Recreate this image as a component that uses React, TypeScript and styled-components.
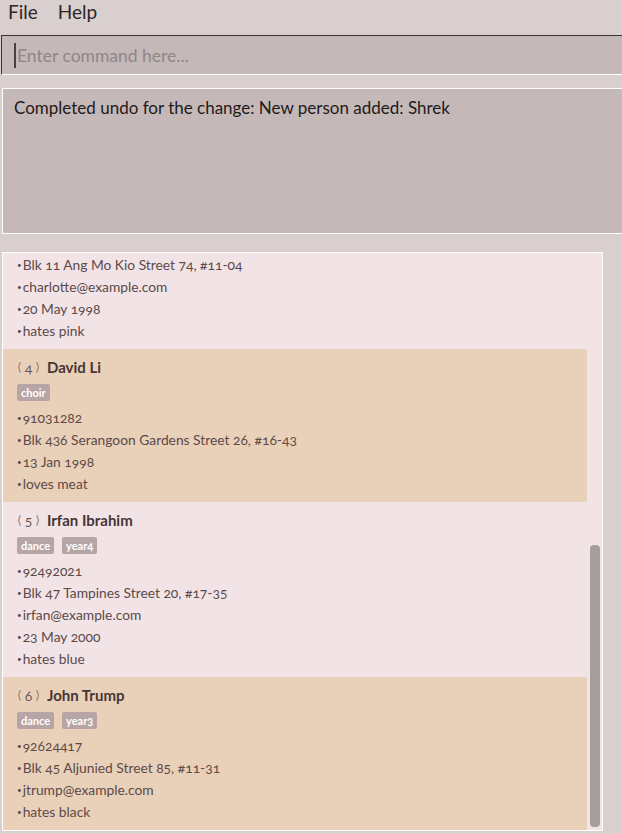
import React, { useLayoutEffect, useRef } from "react";
import styled, { createGlobalStyle } from "styled-components";

const GlobalStyle = createGlobalStyle`
  html, body {
    margin: 0;
    padding: 0;
    background: #dacfcf;
    overflow: hidden;
  }
  body {
    font-family: Lato, "Noto Sans", sans-serif;
    font-variant-numeric: oldstyle-nums;
  }
  * {
    box-sizing: border-box;
  }
`;

const Window = styled.div`
  width: 622px;
  height: 834px;
  background: #dacfcf;
  display: flex;
  flex-direction: column;
  overflow: hidden;
`;

const MenuBar = styled.div`
  height: 24px;
  flex: none;
  display: flex;
  align-items: center;
  gap: 20px;
  padding-left: 8px;
  font-size: 19px;
  color: #2c2626;
`;

const MenuItem = styled.span`
  line-height: 22px;
`;

const CommandBox = styled.div`
  flex: none;
  margin-top: 11px;
  margin-left: 1px;
  height: 40px;
  background: #c5b8b8;
  border-top: 1px solid #3c3333;
  border-left: 1px solid #3c3333;
  border-bottom: 1px solid #ffffff;
  display: flex;
  align-items: center;
  padding-left: 12px;
  gap: 1px;
`;

const Caret = styled.span`
  width: 2px;
  height: 25px;
  background: #4a4040;
  flex: none;
`;

const CommandInput = styled.input`
  flex: 1;
  border: none;
  outline: none;
  background: transparent;
  font-family: Lato, "Noto Sans", sans-serif;
  font-size: 17.5px;
  color: #2c2626;
  padding: 0;
  &::placeholder {
    color: #8f8686;
  }
`;

const ResultBox = styled.div`
  flex: none;
  margin-top: 13px;
  margin-left: 2px;
  height: 146px;
  background: #c5b8b8;
  border: 1px solid #ffffff;
  border-right: none;
  padding: 9px 11px;
  font-size: 17px;
  color: #1f1a1a;
  line-height: 20px;
`;

const ListPanel = styled.div`
  flex: none;
  margin-top: 18px;
  margin-left: 2px;
  width: 601px;
  height: 579px;
  border: 1px solid #ffffff;
  background: #f2e4e6;
  display: flex;
`;

const Viewport = styled.div`
  flex: 1;
  overflow: hidden;
`;

const ScrollTrack = styled.div`
  width: 15px;
  flex: none;
  display: flex;
  flex-direction: column;
  justify-content: flex-end;
  padding: 0 2px 3px 3px;
`;

const Thumb = styled.div`
  height: 282px;
  background: #a69d9e;
  border-radius: 4px;
`;

const Card = styled.div<{ $alt: boolean }>`
  background: ${(p) => (p.$alt ? "#e8d1b8" : "#f2e4e6")};
  padding: 8px 14px 7px;
  display: flex;
  flex-direction: column;
`;

const NameRow = styled.div`
  height: 20px;
  display: flex;
  align-items: center;
  font-size: 15px;
  color: #483535;
`;

const Index = styled.span`
  display: flex;
  align-items: center;
  gap: 3px;
  color: #6a5656;
  margin-right: 7px;
  font-size: 14px;
`;

const Bracket = styled.span`
  font-family: "DejaVu Sans", sans-serif;
  font-size: 12px;
  color: #8a7676;
`;

const Name = styled.span`
  font-weight: 700;
`;

const Tags = styled.div`
  margin-top: 7px;
  margin-bottom: 6px;
  display: flex;
  gap: 8px;
`;

const Tag = styled.span`
  height: 17px;
  padding: 0 4px;
  background: #b7a4a4;
  color: #ffffff;
  border-radius: 2px;
  font-size: 11px;
  font-weight: 700;
  line-height: 17px;
`;

const Line = styled.div`
  height: 22px;
  line-height: 22px;
  font-size: 13.8px;
  color: #5c4949;
  display: flex;
  align-items: center;
`;

const Bullet = styled.span`
  font-size: 8px;
  margin-right: 1px;
`;

type Person = {
  name: string;
  tags: string[];
  lines: string[];
};

const people: Person[] = [
  {
    name: "Alex Yeoh",
    tags: ["friends"],
    lines: ["87438807", "Blk 30 Geylang Street 29, #06-40", "alexyeoh@example.com", "12 Feb 1999", "likes cats"],
  },
  {
    name: "Bernice Yu",
    tags: ["colleagues", "friends"],
    lines: ["99272758", "Blk 30 Lorong 3 Serangoon Gardens, #07-18", "berniceyu@example.com", "3 Mar 1997", "loves tea"],
  },
  {
    name: "Charlotte Oliveiro",
    tags: ["neighbours"],
    lines: ["93210283", "Blk 11 Ang Mo Kio Street 74, #11-04", "charlotte@example.com", "20 May 1998", "hates pink"],
  },
  {
    name: "David Li",
    tags: ["choir"],
    lines: ["91031282", "Blk 436 Serangoon Gardens Street 26, #16-43", "13 Jan 1998", "loves meat"],
  },
  {
    name: "Irfan Ibrahim",
    tags: ["dance", "year4"],
    lines: ["92492021", "Blk 47 Tampines Street 20, #17-35", "irfan@example.com", "23 May 2000", "hates blue"],
  },
  {
    name: "John Trump",
    tags: ["dance", "year3"],
    lines: ["92624417", "Blk 45 Aljunied Street 85, #11-31", "jtrump@example.com", "hates black"],
  },
];

export default function App() {
  const listRef = useRef<HTMLDivElement>(null);

  useLayoutEffect(() => {
    const el = listRef.current;
    if (el) el.scrollTop = el.scrollHeight;
  }, []);

  return (
    <>
      <GlobalStyle />
      <Window>
        <MenuBar>
          <MenuItem>File</MenuItem>
          <MenuItem>Help</MenuItem>
        </MenuBar>
        <CommandBox>
          <Caret />
          <CommandInput placeholder="Enter command here..." />
        </CommandBox>
        <ResultBox>Completed undo for the change: New person added: Shrek</ResultBox>
        <ListPanel>
          <Viewport ref={listRef}>
            {people.map((p, i) => (
              <Card key={p.name} $alt={i % 2 === 1}>
                <NameRow>
                  <Index>
                    <Bracket>⟨</Bracket>
                    {i + 1}
                    <Bracket>⟩</Bracket>
                  </Index>
                  <Name>{p.name}</Name>
                </NameRow>
                <Tags>
                  {p.tags.map((t) => (
                    <Tag key={t}>{t}</Tag>
                  ))}
                </Tags>
                {p.lines.map((l) => (
                  <Line key={l}>
                    <Bullet>•</Bullet>
                    {l}
                  </Line>
                ))}
              </Card>
            ))}
          </Viewport>
          <ScrollTrack>
            <Thumb />
          </ScrollTrack>
        </ListPanel>
      </Window>
    </>
  );
}
